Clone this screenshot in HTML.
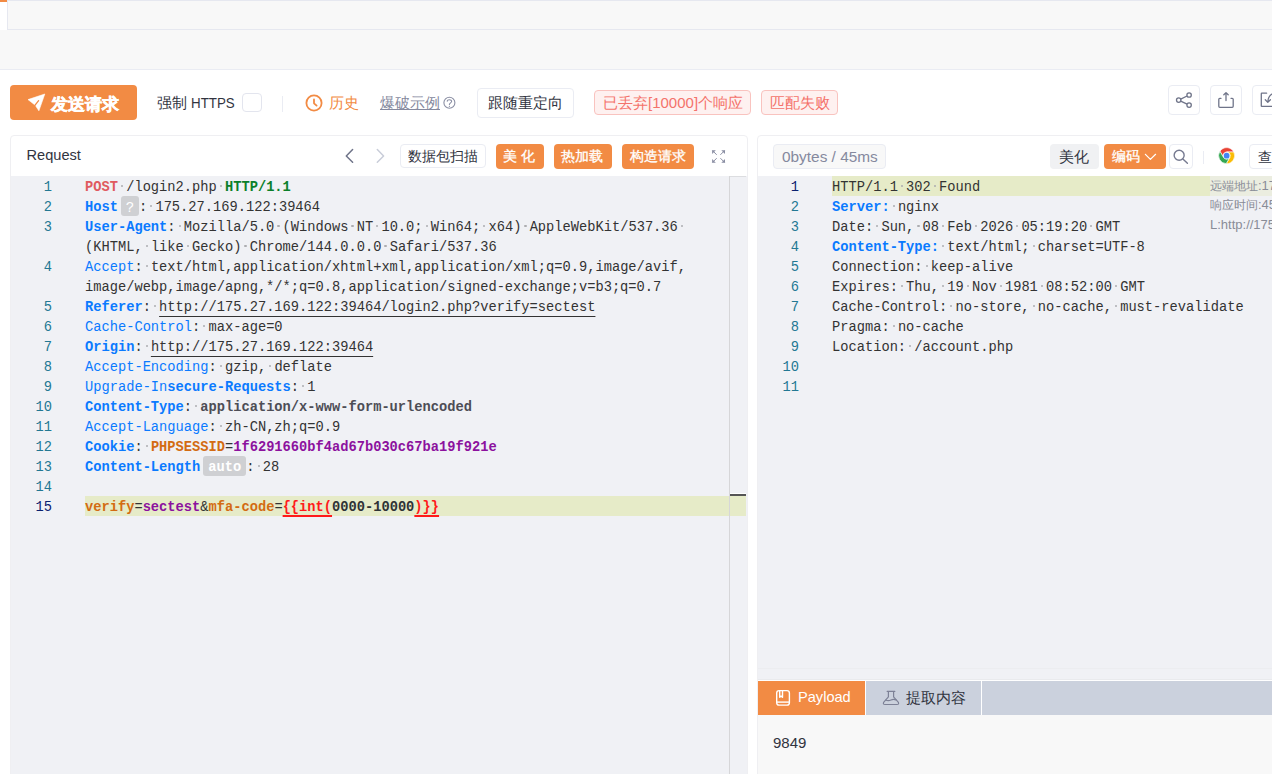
<!DOCTYPE html>
<html><head><meta charset="utf-8">
<style>
*{box-sizing:border-box;margin:0;padding:0}
html,body{width:1272px;height:774px;overflow:hidden;background:#fff;font-family:"Liberation Sans",sans-serif;color:#31343f;position:relative}
.a{position:absolute}
.t{position:absolute;white-space:nowrap;line-height:1}
.box{position:absolute;border:1px solid #eaecf3;border-radius:4px;background:#fff}
.ob{position:absolute;background:#f28b44;border-radius:4px;color:#fff}
.tag{position:absolute;border:1px solid #f9c3bf;background:#fef1f0;border-radius:4px;color:#f4736b}
/* code */
.ln{position:absolute;padding-top:2px;width:60px;text-align:right;font-family:"Liberation Mono",monospace;font-size:13.73px;line-height:20px;height:20px;color:#237893}
.ln.act{color:#0b216f}
.cl{position:absolute;padding-top:2px;white-space:pre;font-family:"Liberation Mono",monospace;font-size:13.73px;line-height:20px;height:20px;color:#333}
.ws{color:transparent;position:relative}
.ws::after{content:"";position:absolute;left:50%;top:4.6px;width:2.2px;height:2.2px;margin-left:-1.1px;border-radius:50%;background:#adadb0}
.kb{color:#0a7aff;font-weight:bold}
.k{color:#0a7aff}
.m{color:#e05a5f;font-weight:bold}
.ver{color:#0b7f2a;font-weight:bold}
.u{text-decoration:underline;text-underline-offset:5px}
.vb{font-weight:bold;color:#4d4d55}
.ck{color:#d36b12;font-weight:bold}
.cv{color:#8c119e;font-weight:bold}
.pk{color:#d36b12;font-weight:bold}
.pv{color:#8c119e;font-weight:bold}
.tg{color:#ff1a1a;font-weight:bold;text-decoration:underline;text-decoration-thickness:1.6px;text-underline-offset:4px}
.tv{color:#2f3336;font-weight:bold}
.bdg{display:inline-block;vertical-align:top;margin-top:-2px;height:19.5px;line-height:24px;border-radius:3px;background:#cfd0d3;color:#fff;font-family:"Liberation Mono",monospace;font-weight:bold;text-align:center;overflow:hidden}
.bdg.q{width:18px;margin-left:3px;font-size:14px;font-weight:normal}
.bdg.au{width:43px;margin-left:3px;font-size:13.73px}
</style></head><body>
<!-- tab bar -->
<div class="a" style="left:0;top:0;width:1272px;height:70px;background:#f8f8f8;border-bottom:1px solid #eaecf3"></div>
<div class="a" style="left:0;top:0;width:7px;height:30px;background:#fff;border-top:2px solid #f28b44"></div>
<div class="a" style="left:7px;top:0;width:1266px;height:30px;border:1px solid #e6e8f0;background:#f8f8f8"></div>

<!-- toolbar -->
<div class="ob" style="left:10px;top:85px;width:127px;height:35px"></div>
<svg class="a" style="left:24px;top:90px" width="26" height="24" viewBox="0 0 26 24"><path d="M4 9.6 L20.8 4 L14.9 20.8 L11.2 15.2 Z" fill="#fff" stroke="#fff" stroke-width="0.6" stroke-linejoin="round"/><path d="M10.9 15.4 L14.6 10.7" stroke="#f28b44" stroke-width="1.3" stroke-linecap="round"/></svg>
<div class="t" style="left:51px;top:96px;font-size:17px;font-weight:bold;color:#fff;-webkit-text-stroke:0.5px #fff">发送请求</div>

<div class="t" style="left:157px;top:95px;font-size:15px;color:#31343f">强制</div><div class="t" style="left:191px;top:95px;font-size:15px;color:#31343f;transform:scaleX(0.89);transform-origin:0 0">HTTPS</div>
<div class="a" style="left:242px;top:93px;width:20px;height:19px;border:1px solid #e3e5ee;border-radius:4px;background:#fff"></div>
<div class="a" style="left:282px;top:96px;width:1px;height:16px;background:#eaecf3"></div>
<svg class="a" style="left:305px;top:94px" width="18" height="18" viewBox="0 0 18 18"><circle cx="9" cy="9" r="7.6" fill="none" stroke="#f28b44" stroke-width="1.8"/><path d="M9 5.4 L9 9.3 L11.6 11.6" fill="none" stroke="#f28b44" stroke-width="1.8" stroke-linecap="round" stroke-linejoin="round"/></svg>
<div class="t" style="left:329px;top:95px;font-size:15px;color:#f28b44">历史</div>
<div class="t" style="left:380px;top:95px;font-size:15px;color:#85899e;text-decoration:underline">爆破示例</div>
<svg class="a" style="left:442px;top:96px" width="14" height="14" viewBox="0 0 14 14"><g fill="none" stroke="#8a8ea3" stroke-width="1.1" stroke-linecap="round"><circle cx="7.4" cy="6.8" r="5.5"/><path d="M5.2 5.1 C5.3 3.3 9.8 3.3 9.6 5.5 C9.5 6.8 7.4 7 7.4 8.6"/></g><circle cx="7.4" cy="10.3" r="0.65" fill="#8a8ea3"/></svg>
<div class="box" style="left:477px;top:88px;width:97px;height:30px"></div>
<div class="t" style="left:488px;top:95px;font-size:15px;color:#31343f">跟随重定向</div>
<div class="tag" style="left:594px;top:90px;width:157px;height:25px"></div>
<div class="t" style="left:603px;top:95px;font-size:15px;color:#f4736b">已丢弃[10000]个响应</div>
<div class="tag" style="left:761px;top:90px;width:77px;height:25px"></div>
<div class="t" style="left:770px;top:95px;font-size:15px;color:#f4736b">匹配失败</div>

<div class="box" style="left:1168px;top:85px;width:32px;height:30px"></div>
<svg class="a" style="left:1168px;top:85px" width="32" height="30" viewBox="0 0 32 30"><g fill="none" stroke="#6f7489" stroke-width="1.3"><circle cx="10.7" cy="15.1" r="2.2"/><circle cx="21.1" cy="10" r="2.2"/><circle cx="21.1" cy="20.1" r="2.2"/><path d="M12.7 14.1 L19.1 11 M12.7 16.1 L19.1 19.1"/></g></svg>
<div class="box" style="left:1210px;top:85px;width:32px;height:30px"></div>
<svg class="a" style="left:1210px;top:85px" width="32" height="30" viewBox="0 0 32 30"><g fill="none" stroke="#6f7489" stroke-width="1.3" stroke-linecap="round" stroke-linejoin="round"><path d="M11 13.3 L9.8 13.3 Q8.8 13.3 8.8 14.3 L8.8 21.3 Q8.8 22.3 9.8 22.3 L22.2 22.3 Q23.2 22.3 23.2 21.3 L23.2 14.3 Q23.2 13.3 22.2 13.3 L21 13.3"/><path d="M16 7.6 L16 15.5 M13.8 9.8 L16 7.6 L18.2 9.8"/></g></svg>
<div class="box" style="left:1252px;top:85px;width:32px;height:30px"></div>
<svg class="a" style="left:1252px;top:85px" width="32" height="30" viewBox="0 0 32 30"><g fill="none" stroke="#6f7489" stroke-width="1.3" stroke-linecap="round" stroke-linejoin="round"><path d="M14.6 8.2 L9.8 8.2 Q9.3 8.2 9.3 8.7 L9.3 20.9 Q9.3 21.4 9.8 21.4 L22 21.4"/><path d="M21 8.5 Q16 11 15.8 17.2 M13.3 14.8 L15.8 17.4 L18.4 14.8"/></g></svg>

<!-- request panel -->
<div class="box" style="left:10px;top:135px;width:738px;height:660px;border-color:#efeff2;overflow:hidden">
  <div class="a" style="left:0;top:40px;width:736px;height:620px;background:#f0f1f5"></div>
</div>
<div class="t" style="left:26.5px;top:148px;font-size:14.6px;color:#31343f">Request</div>
<svg class="a" style="left:340px;top:146px" width="50" height="20" viewBox="0 0 50 20"><path d="M12.6 3.5 L6.3 10 L12.6 16.3" fill="none" stroke="#6f7489" stroke-width="1.5" stroke-linecap="round" stroke-linejoin="round"/><path d="M37.3 3.5 L43.6 10 L37.3 16.3" fill="none" stroke="#c9cdd9" stroke-width="1.5" stroke-linecap="round" stroke-linejoin="round"/></svg>
<div class="box" style="left:400px;top:144px;width:86px;height:24px"></div>
<div class="t" style="left:408px;top:149px;font-size:14px;color:#31343f">数据包扫描</div>
<div class="ob" style="left:496px;top:144px;width:48px;height:25px"></div>
<div class="t" style="left:503px;top:149px;font-size:14px;color:#fff;letter-spacing:4px;font-weight:500;-webkit-text-stroke:0.3px #fff">美化</div>
<div class="ob" style="left:554px;top:144px;width:58px;height:25px"></div>
<div class="t" style="left:561px;top:149px;font-size:14px;color:#fff;font-weight:500;-webkit-text-stroke:0.3px #fff">热加载</div>
<div class="ob" style="left:622px;top:144px;width:72px;height:25px"></div>
<div class="t" style="left:630px;top:149px;font-size:14px;color:#fff;font-weight:500;-webkit-text-stroke:0.3px #fff">构造请求</div>
<svg class="a" style="left:705px;top:144px" width="27" height="26" viewBox="0 0 27 26"><g fill="#8a8ea3" stroke="#8a8ea3" stroke-width="1"><path d="M7.5 6.6 L11.7 10.8" /><path d="M7.1 6.2 L10.8 6.2 L7.1 9.9 Z" stroke="none"/><path d="M19.6 6.6 L15.4 10.8"/><path d="M20 6.2 L16.3 6.2 L20 9.9 Z" stroke="none"/><path d="M7.5 18.4 L11.7 14.2"/><path d="M7.1 18.8 L10.8 18.8 L7.1 15.1 Z" stroke="none"/><path d="M19.6 18.4 L15.4 14.2"/><path d="M20 18.8 L16.3 18.8 L20 15.1 Z" stroke="none"/></g></svg>

<!-- req editor extras -->
<div class="a" style="left:85px;top:496px;width:661px;height:20px;background:#e6ebc8"></div>
<div class="a" style="left:729px;top:176px;width:1px;height:598px;background:#d6d6d8"></div>
<div class="a" style="left:730px;top:176px;width:16px;height:1px;background:#dcdde0"></div>
<div class="a" style="left:730px;top:493px;width:16px;height:1px;background:#fff"></div>
<div class="a" style="left:730px;top:494px;width:16px;height:2px;background:#555"></div>
<div class="ln" style="top:176px;left:-8px">1</div>
<div class="cl" style="top:176px;left:85px"><span class="m">POST</span><span class="ws">·</span>/login2.php<span class="ws">·</span><span class="ver">HTTP/1.1</span></div>
<div class="ln" style="top:196px;left:-8px">2</div>
<div class="cl" style="top:196px;left:85px"><span class="kb">Host</span><span class="bdg q">?</span>:<span class="ws">·</span>175.27.169.122:39464</div>
<div class="ln" style="top:216px;left:-8px">3</div>
<div class="cl" style="top:216px;left:85px"><span class="kb">User-Agent</span>:<span class="ws">·</span>Mozilla/5.0<span class="ws">·</span>(Windows<span class="ws">·</span>NT<span class="ws">·</span>10.0;<span class="ws">·</span>Win64;<span class="ws">·</span>x64)<span class="ws">·</span>AppleWebKit/537.36<span class="ws">·</span></div>
<div class="cl" style="top:236px;left:85px">(KHTML,<span class="ws">·</span>like<span class="ws">·</span>Gecko)<span class="ws">·</span>Chrome/144.0.0.0<span class="ws">·</span>Safari/537.36</div>
<div class="ln" style="top:256px;left:-8px">4</div>
<div class="cl" style="top:256px;left:85px"><span class="k">Accept</span>:<span class="ws">·</span>text/html,application/xhtml+xml,application/xml;q=0.9,image/avif,</div>
<div class="cl" style="top:276px;left:85px">image/webp,image/apng,*/*;q=0.8,application/signed-exchange;v=b3;q=0.7</div>
<div class="ln" style="top:296px;left:-8px">5</div>
<div class="cl" style="top:296px;left:85px"><span class="kb">Referer</span>:<span class="ws">·</span><span class="u">http://175.27.169.122:39464/login2.php?verify=sectest</span></div>
<div class="ln" style="top:316px;left:-8px">6</div>
<div class="cl" style="top:316px;left:85px"><span class="k">Cache-Control</span>:<span class="ws">·</span>max-age=0</div>
<div class="ln" style="top:336px;left:-8px">7</div>
<div class="cl" style="top:336px;left:85px"><span class="kb">Origin</span>:<span class="ws">·</span><span class="u">http://175.27.169.122:39464</span></div>
<div class="ln" style="top:356px;left:-8px">8</div>
<div class="cl" style="top:356px;left:85px"><span class="k">Accept-Encoding</span>:<span class="ws">·</span>gzip,<span class="ws">·</span>deflate</div>
<div class="ln" style="top:376px;left:-8px">9</div>
<div class="cl" style="top:376px;left:85px"><span class="k">Upgrade-In</span><span class="kb">secure-Requests</span>:<span class="ws">·</span>1</div>
<div class="ln" style="top:396px;left:-8px">10</div>
<div class="cl" style="top:396px;left:85px"><span class="kb">Content-Type</span>:<span class="ws">·</span><span class="vb">application/x-www-form-urlencoded</span></div>
<div class="ln" style="top:416px;left:-8px">11</div>
<div class="cl" style="top:416px;left:85px"><span class="k">Accept-Language</span>:<span class="ws">·</span>zh-CN,zh;q=0.9</div>
<div class="ln" style="top:436px;left:-8px">12</div>
<div class="cl" style="top:436px;left:85px"><span class="kb">Cookie</span>:<span class="ws">·</span><span class="ck">PHPSESSID</span>=<span class="cv">1f6291660bf4ad67b030c67ba19f921e</span></div>
<div class="ln" style="top:456px;left:-8px">13</div>
<div class="cl" style="top:456px;left:85px"><span class="kb">Content-Length</span><span class="bdg au">auto</span>:<span class="ws">·</span>28</div>
<div class="ln" style="top:476px;left:-8px">14</div>
<div class="cl" style="top:476px;left:85px"></div>
<div class="ln act" style="top:496px;left:-8px">15</div>
<div class="cl" style="top:496px;left:85px"><span class="pk">verify</span>=<span class="pv">sectest</span>&amp;<span class="pk">mfa-code</span>=<span class="tg">{{int(</span><span class="tv">0000-10000</span><span class="tg">)}}</span></div>

<!-- response panel -->
<div class="box" style="left:757px;top:135px;width:530px;height:660px;border-color:#efeff2;overflow:hidden">
  <div class="a" style="left:0;top:40px;width:530px;height:620px;background:#f0f1f5"></div>
</div>
<div class="a" style="left:773px;top:144px;width:113px;height:25px;border:1px solid #eaecf3;border-radius:4px;background:#f8f8f8"></div>
<div class="t" style="left:782px;top:149px;font-size:15.4px;color:#85899e">0bytes / 45ms</div>
<div class="a" style="left:1050px;top:144px;width:49px;height:25px;border-radius:4px;background:#f0f1f3"></div>
<div class="t" style="left:1059px;top:149px;font-size:15px;color:#31343f">美化</div>
<div class="ob" style="left:1104px;top:144px;width:62px;height:25px"></div>
<div class="t" style="left:1112px;top:149px;font-size:14px;color:#fff;font-weight:500;-webkit-text-stroke:0.3px #fff">编码</div>
<svg class="a" style="left:1144px;top:151px" width="13" height="10" viewBox="0 0 13 10"><path d="M1.4 3.3 L6.4 8.4 L11.6 3.3" fill="none" stroke="#fff" stroke-width="1.2" stroke-linecap="round" stroke-linejoin="round"/></svg>
<div class="box" style="left:1169px;top:144px;width:24px;height:25px"></div>
<svg class="a" style="left:1171px;top:147px" width="20" height="20" viewBox="0 0 20 20"><circle cx="8.15" cy="8.2" r="5" fill="none" stroke="#767a90" stroke-width="1.4"/><path d="M11.9 11.9 L16.4 16.3" stroke="#767a90" stroke-width="1.4" stroke-linecap="round"/></svg>
<div class="a" style="left:1203px;top:151px;width:1px;height:13px;background:#eaecf3"></div>
<svg class="a" style="left:1217.4px;top:146.2px" width="19.3" height="19.3" viewBox="0 0 48 48"><g stroke="#fff" stroke-width="1.6" stroke-linejoin="round"><path fill="#e94235" d="M7.28 13.03 A20 20 0 0 1 41.86 15 L24 15 A9 9 0 0 0 16.21 28.5 Z"/><path fill="#fbbc04" d="M41.86 15 A20 20 0 0 1 22.86 43.97 L31.79 28.5 A9 9 0 0 0 24 15 Z"/><path fill="#34a853" d="M22.86 43.97 A20 20 0 0 1 7.28 13.03 L16.21 28.5 A9 9 0 0 0 31.79 28.5 Z"/></g><circle cx="24" cy="24" r="7.2" fill="#4285f4"/></svg>
<div class="box" style="left:1249px;top:144px;width:40px;height:25px"></div>
<div class="t" style="left:1258px;top:150px;font-size:14px;color:#31343f">查看</div>

<div class="a" style="left:832px;top:176px;width:378px;height:20px;background:#e6ebc8"></div>
<div class="a" style="left:1210px;top:176px;width:62px;height:20px;background:#ebede0"></div>
<div class="ln act" style="top:176px;left:739px">1</div>
<div class="cl" style="top:176px;left:832px">HTTP/1.1<span class="ws">·</span>302<span class="ws">·</span>Found</div>
<div class="ln" style="top:196px;left:739px">2</div>
<div class="cl" style="top:196px;left:832px"><span class="kb">Server:</span><span class="ws">·</span>nginx</div>
<div class="ln" style="top:216px;left:739px">3</div>
<div class="cl" style="top:216px;left:832px">Date:<span class="ws">·</span>Sun,<span class="ws">·</span>08<span class="ws">·</span>Feb<span class="ws">·</span>2026<span class="ws">·</span>05:19:20<span class="ws">·</span>GMT</div>
<div class="ln" style="top:236px;left:739px">4</div>
<div class="cl" style="top:236px;left:832px"><span class="kb">Content-Type:</span><span class="ws">·</span>text/html;<span class="ws">·</span>charset=UTF-8</div>
<div class="ln" style="top:256px;left:739px">5</div>
<div class="cl" style="top:256px;left:832px">Connection:<span class="ws">·</span>keep-alive</div>
<div class="ln" style="top:276px;left:739px">6</div>
<div class="cl" style="top:276px;left:832px">Expires:<span class="ws">·</span>Thu,<span class="ws">·</span>19<span class="ws">·</span>Nov<span class="ws">·</span>1981<span class="ws">·</span>08:52:00<span class="ws">·</span>GMT</div>
<div class="ln" style="top:296px;left:739px">7</div>
<div class="cl" style="top:296px;left:832px">Cache-Control:<span class="ws">·</span>no-store,<span class="ws">·</span>no-cache,<span class="ws">·</span>must-revalidate</div>
<div class="ln" style="top:316px;left:739px">8</div>
<div class="cl" style="top:316px;left:832px">Pragma:<span class="ws">·</span>no-cache</div>
<div class="ln" style="top:336px;left:739px">9</div>
<div class="cl" style="top:336px;left:832px">Location:<span class="ws">·</span>/account.php</div>
<div class="ln" style="top:356px;left:739px">10</div>
<div class="cl" style="top:356px;left:832px"></div>
<div class="ln" style="top:376px;left:739px">11</div>
<div class="cl" style="top:376px;left:832px"></div>
<div class="t" style="left:1210px;top:179px;font-size:12px;color:#898c97">远端地址<span style="font-size:13px">:175.27.169.122:39464</span></div>
<div class="t" style="left:1210px;top:198px;font-size:12px;color:#898c97">响应时间<span style="font-size:13px">:45ms</span></div>
<div class="t" style="left:1210px;top:218px;font-size:13px;color:#898c97">L:http://175.27.169.122</div>

<!-- payload tabs -->
<div class="a" style="left:758px;top:668px;width:514px;height:1px;background:#ecedf0"></div>
<div class="a" style="left:758px;top:679px;width:514px;height:1px;background:#e9eaed"></div>
<div class="a" style="left:758px;top:680px;width:514px;height:1px;background:#fff"></div>
<div class="a" style="left:758px;top:681px;width:514px;height:34px;background:#cbd1dd"></div>
<div class="a" style="left:758px;top:681px;width:107px;height:34px;background:#f28b44"></div>
<div class="a" style="left:865px;top:681px;width:1px;height:34px;background:#fff"></div>
<div class="a" style="left:981px;top:681px;width:1px;height:34px;background:#fff"></div>
<svg class="a" style="left:770px;top:684px" width="30" height="28" viewBox="0 0 30 28"><g fill="none" stroke="#fff" stroke-width="1.4" stroke-linejoin="round"><rect x="6.7" y="6.6" width="12.7" height="14.5" rx="2.4"/><path d="M6.7 18.1 L19.4 18.1"/><path d="M9.7 6.8 L9.7 13.2 L11.1 12.1 L12.5 13.2 L12.5 6.8"/></g></svg>
<div class="t" style="left:798px;top:690px;font-size:14.6px;color:#fff">Payload</div>
<svg class="a" style="left:876px;top:684px" width="30" height="28" viewBox="0 0 30 28"><g fill="none" stroke="#7d8196" stroke-width="1.2" stroke-linejoin="round" stroke-linecap="round"><path d="M11.2 7.4 L18.8 7.4 M12.4 7.4 L12.4 12.8 L7.6 18.4 Q6.8 20.5 9 20.5 L21 20.5 Q23.2 20.5 22.4 18.4 L17.6 12.8 L17.6 7.4"/><path d="M9.8 16.2 Q12.5 17.2 15 16 Q17.5 14.8 20 15.9"/></g></svg>
<div class="t" style="left:906px;top:690px;font-size:15px;color:#31343f">提取内容</div>
<div class="a" style="left:758px;top:715px;width:514px;height:59px;background:#f8f8f8"></div>
<div class="t" style="left:773px;top:735px;font-size:15px;color:#31343f">9849</div>
</body></html>
